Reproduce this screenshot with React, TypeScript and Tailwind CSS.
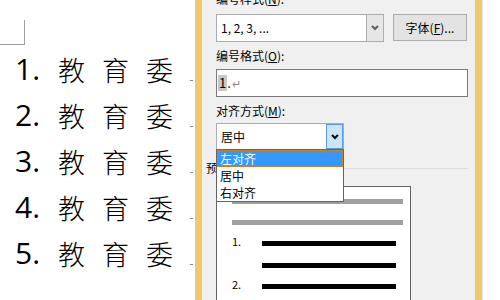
import React from "react";

const cjk = { fontFamily: '"Noto Sans CJK SC", "Noto Sans", sans-serif' };
const ui = { fontFamily: '"Noto Sans CJK SC", "Noto Sans", sans-serif' };

function Chevron({ color = "#000" }: { color?: string }) {
  return (
    <svg width="8" height="6" viewBox="0 0 8 6">
      <path d="M1 1 L4 4 L7 1" stroke={color} strokeWidth="2" fill="none" />
    </svg>
  );
}

function Row({ n }: { n: number }) {
  return (
    <div className="flex items-center h-[46px] pl-[15px] relative">
      <span className="w-[43px] text-[30px] leading-none text-black" style={{ fontFamily: '"Open Sans", "Noto Sans", sans-serif' }}>
        {n}.
      </span>
      {["教", "育", "委"].map((c) => (
        <span key={c} className="w-[44px] text-[27px] leading-none text-black font-light" style={cjk}>
          {c}
        </span>
      ))}
      <span className="absolute left-[190px] bottom-[11px] w-[3px] h-[1px] bg-[#8a8a8a]" />
    </div>
  );
}

export default function App() {
  return (
    <div className="w-[500px] h-[300px] flex bg-white overflow-hidden">
      {/* document */}
      <div className="w-[195px] h-full flex flex-col">
        <div className="w-[25px] h-[25px] mt-[20px] border-r border-b border-[#a0a0a0]" />
        <div className="mt-[1px]">
          {[1, 2, 3, 4, 5].map((n) => (
            <Row key={n} n={n} />
          ))}
        </div>
      </div>
      {/* dialog */}
      <div className="w-[287px] h-full border-x-[6px] border-[#f0c96c] flex">
        <div className="flex-1 h-full bg-[#f0f0f0] border-x border-[#d6c7a0] relative">
          <div className="pl-[14px] pr-[6px] text-[12px] text-black" style={ui}>
            <div className="h-[16px] leading-[16px] mt-[-9px]">
              编号样式(<span className="underline">N</span>):
            </div>
            <div className="flex mt-[7px] gap-[9px]">
              <div className="w-[168px] h-[28px] bg-white border border-[#abadb3] flex">
                <div className="flex-1 flex items-center pl-[4px] text-[12px]" style={ui}>
                  1, 2, 3, ...
                </div>
                <div className="w-[17px] h-full bg-[#e6e6e6] border-l border-[#abadb3] flex items-center justify-center">
                  <Chevron color="#606060" />
                </div>
              </div>
              <div className="w-[74px] h-[27px] bg-[#e3e3e3] border border-[#adadad] flex items-center justify-center text-[12px]">
                字体(<span className="underline">F</span>)...
              </div>
            </div>
            <div className="h-[16px] leading-[16px] mt-[6px]">
              编号格式(<span className="underline">O</span>):
            </div>
            <div className="w-[252px] h-[28px] mt-[5px] bg-white border border-[#7a7a7a] flex items-center pl-[1px]">
              <span className="bg-[#c8c8c8] px-[1px] leading-[16px] text-[13px]">1</span>
              <span className="leading-[16px] text-[13px]">.</span>
              <span className="text-[#8a8a8a] text-[11px] leading-none ml-[1px]">↵</span>
            </div>
            <div className="h-[16px] leading-[16px] mt-[6px]">
              对齐方式(<span className="underline">M</span>):
            </div>
            <div className="w-[128px] h-[27px] mt-[4px] bg-white border border-[#abadb3] flex">
              <div className="flex-1 flex items-center pl-[4px]">居中</div>
              <div className="w-[17px] h-full bg-[#cce4f7] border border-[#569de5] flex items-center justify-center">
                <Chevron />
              </div>
            </div>
            <div className="flex items-center mt-[10px] h-[16px] ml-[-10px] gap-[2px]">
              <span className="leading-[16px]">预览</span>
              <div className="flex-1 h-[1px] bg-[#dcdcdc] mr-[1px]" />
            </div>
            <div className="w-[195px] h-[120px] mt-[10px] bg-white border border-[#646464] pl-[15px] pt-[12px]">
              <div className="w-[171px] h-[5px] bg-[#a0a0a0]" />
              <div className="w-[171px] h-[5px] bg-[#a0a0a0] mt-[16px]" />
              <div className="flex items-start mt-[10px]">
                <span className="w-[30px] text-[11px] leading-[12px]">1.</span>
                <div className="w-[134px] h-[5px] bg-black mt-[6px]" />
              </div>
              <div className="w-[134px] h-[5px] bg-black mt-[16px] ml-[30px]" />
              <div className="flex items-start mt-[10px]">
                <span className="w-[30px] text-[11px] leading-[12px]">2.</span>
                <div className="w-[134px] h-[5px] bg-black mt-[6px]" />
              </div>
            </div>
          </div>
          {/* dropdown list */}
          <div className="absolute left-[14px] top-[149px] w-[128px] bg-white border border-[#646464] text-[12px] text-black" style={ui}>
            <div className="h-[17px] leading-[15px] bg-[#3399ff] text-white border border-dotted border-[#d08a30] pl-[2px]">左对齐</div>
            <div className="h-[17px] leading-[17px] pl-[3px]">居中</div>
            <div className="h-[17px] leading-[17px] pl-[3px]">右对齐</div>
          </div>
        </div>
      </div>
      <div className="flex-1 h-full bg-white border-l border-[#e8e8e8]" />
    </div>
  );
}
